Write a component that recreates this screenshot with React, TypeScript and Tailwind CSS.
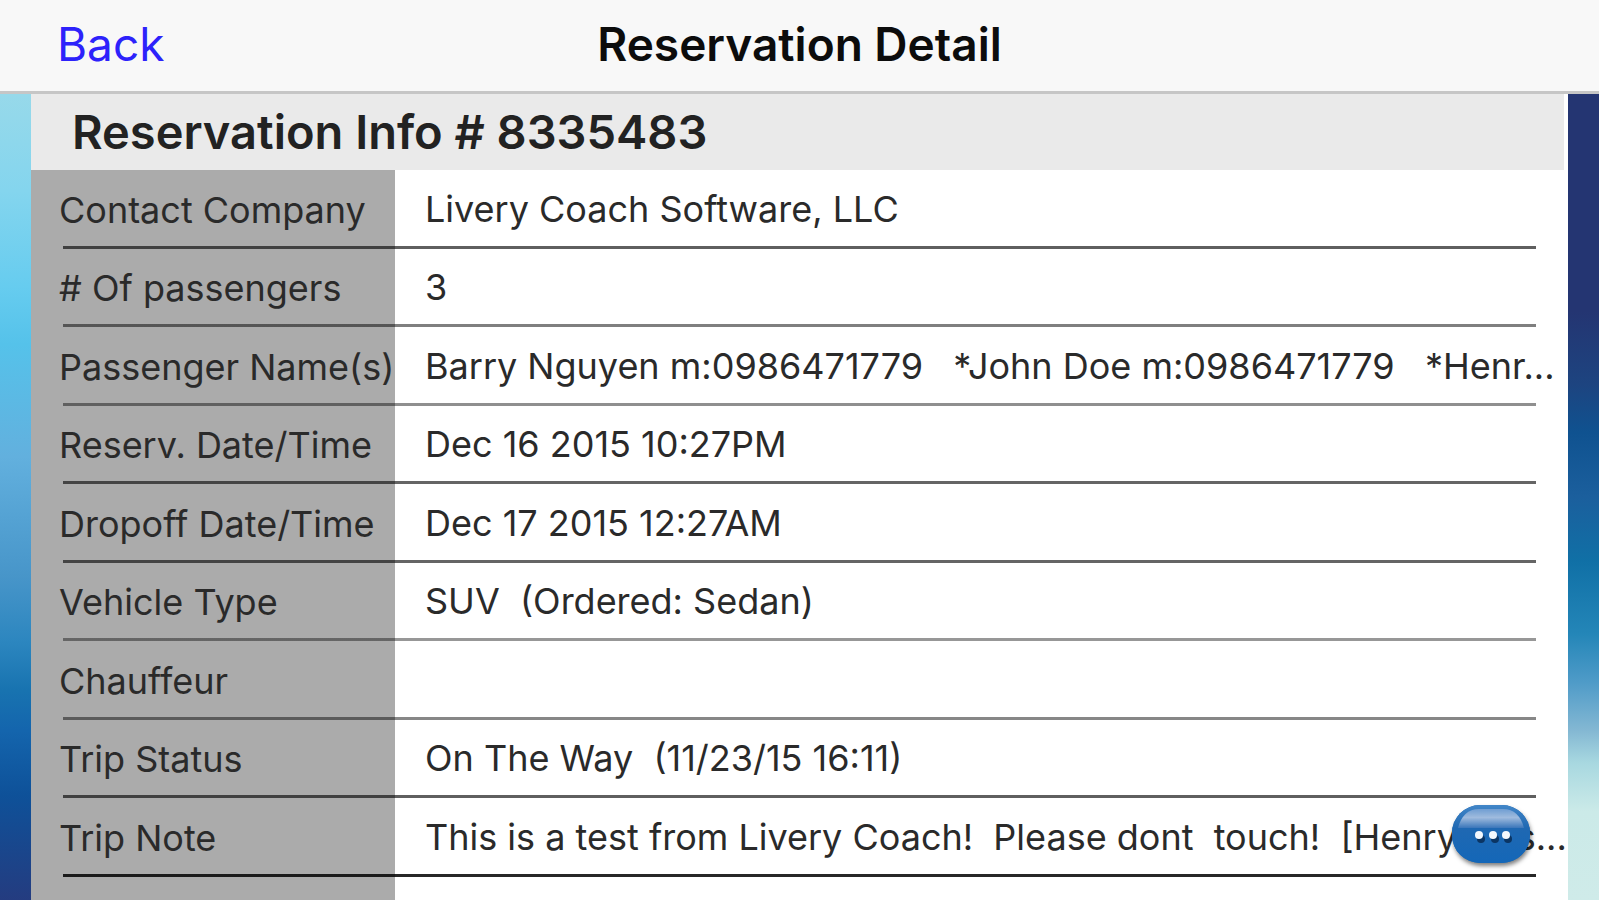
type Row = { label: string; value: string; rule: string };

const rows: Row[] = [
  { label: "Contact Company", value: "Livery Coach Software, LLC", rule: "[--rule:#000000a0]" },
  { label: "# Of passengers", value: "3", rule: "[--rule:#00000080]" },
  { label: "Passenger Name(s)", value: "Barry Nguyen m:0986471779   *John Doe m:0986471779   *Henr...", rule: "[--rule:#00000070]" },
  { label: "Reserv. Date/Time", value: "Dec 16 2015 10:27PM", rule: "[--rule:#0000009a]" },
  { label: "Dropoff Date/Time", value: "Dec 17 2015 12:27AM", rule: "[--rule:#0000009a]" },
  { label: "Vehicle Type", value: "SUV  (Ordered: Sedan)", rule: "[--rule:#00000068]" },
  { label: "Chauffeur", value: "", rule: "[--rule:#00000078]" },
  { label: "Trip Status", value: "On The Way  (11/23/15 16:11)", rule: "[--rule:#000000a0]" },
  { label: "Trip Note", value: "This is a test from Livery Coach!  Please dont  touch!  [Henry was...", rule: "[--rule:#000000d8]" },
];

const ruled = "bg-[linear-gradient(var(--rule),var(--rule))] bg-no-repeat whitespace-pre";

function DetailTable() {
  return (
    <table className="w-full table-fixed border-collapse text-left text-[36px] leading-[44px] text-[#2a2a2a]">
      <colgroup>
        <col className="w-[364px]" />
        <col />
      </colgroup>
      <tbody>
        {rows.map((row) => (
          <tr key={row.label} className={`odd:h-[79px] even:h-[78px] ${row.rule}`}>
            <th
              scope="row"
              className={`bg-right-bottom bg-size-[calc(100%-32px)_3px] py-0 pl-7 font-normal ${ruled}`}
            >
              {row.label}
            </th>
            <td
              className={`bg-left-bottom bg-size-[calc(100%-28px)_3px] pt-0 pb-[2px] pl-[30px] ${ruled}`}
            >
              {row.value}
            </td>
          </tr>
        ))}
      </tbody>
    </table>
  );
}

function MoreButton() {
  return (
    <button
      type="button"
      aria-label="More actions"
      className="fixed right-[69px] bottom-[37px] flex h-[58px] w-[78px] items-center justify-center rounded-[28px] bg-[#1465b4] shadow-[1px_3px_4px_#00000080]"
    >
      <svg viewBox="0 0 78 58" className="h-full w-full" aria-hidden="true">
        <defs>
          <linearGradient id="edge" x1="0" y1="0" x2="0" y2="1">
            <stop offset="0" stopColor="#4286c8" />
            <stop offset="0.4" stopColor="#1f68b2" />
            <stop offset="1" stopColor="#1467b8" />
          </linearGradient>
          <linearGradient id="gloss" x1="0" y1="0" x2="0" y2="1">
            <stop offset="0" stopColor="#6f9dd2" />
            <stop offset="0.45" stopColor="#9fbbde" />
            <stop offset="1" stopColor="#3a76ba" />
          </linearGradient>
        </defs>
        <rect width="78" height="58" rx="28" fill="url(#edge)" />
        <path d="M6 23C9 11 16 4 27 4H51C62 4 69 11 72 23Z" fill="url(#gloss)" />
        <g fill="#0b3563">
          <circle cx="29" cy="34" r="4" />
          <circle cx="43" cy="34" r="4" />
          <circle cx="56" cy="34" r="4" />
        </g>
        <g fill="#f4f8fd">
          <circle cx="27" cy="30" r="4" />
          <circle cx="41" cy="30" r="4" />
          <circle cx="54" cy="30" r="4" />
        </g>
      </svg>
    </button>
  );
}

export default function App() {
  return (
    <div className="flex min-h-screen flex-col bg-white font-['Inter','Liberation_Sans',sans-serif]">
      <header className="grid h-[94px] grid-cols-[1fr_auto_1fr] items-center border-b-3 border-[#c6c6c6] bg-[#f8f8f8] px-[57px] pb-[3px]">
        <button type="button" className="justify-self-start text-[46px] leading-[56px] text-[#2d22fb]">
          Back
        </button>
        <h1 className="text-[46px] leading-[56px] font-semibold text-[#0c0c0c]">Reservation Detail</h1>
      </header>
      <div className="flex flex-1 bg-white">
        <div className="w-[31px] shrink-0 bg-[linear-gradient(to_bottom,#97d9ea_0%,#84d5ee_12%,#66ccef_24%,#55c2ea_31%,#62b0de_45%,#4795c9_60%,#2c86bf_68%,#1873b0_74%,#1465ad_79%,#0e5199_87%,#243c80_100%)]" />
        <main className="flex min-w-0 flex-1 flex-col pr-1">
          <h2 className="h-[76px] bg-[#eaeaea] pl-[41px] text-[47px] leading-[76px] font-semibold whitespace-nowrap text-[#222222]">
            Reservation Info # 8335483
          </h2>
          <div className="flex-1 bg-[linear-gradient(to_right,#ababab_364px,#ffffff_364px)]">
            <DetailTable />
          </div>
        </main>
        <div className="w-[31px] shrink-0 bg-[linear-gradient(to_bottom,#243572_0%,#243572_27%,#1d4480_36%,#0f5290_42%,#1b5f9d_50%,#1070a6_58%,#2486b8_67%,#4f9bc8_73%,#84b8d3_79%,#a8d8e0_83%,#cbeae8_89%,#cfebe9_100%)]" />
      </div>
      <MoreButton />
    </div>
  );
}
